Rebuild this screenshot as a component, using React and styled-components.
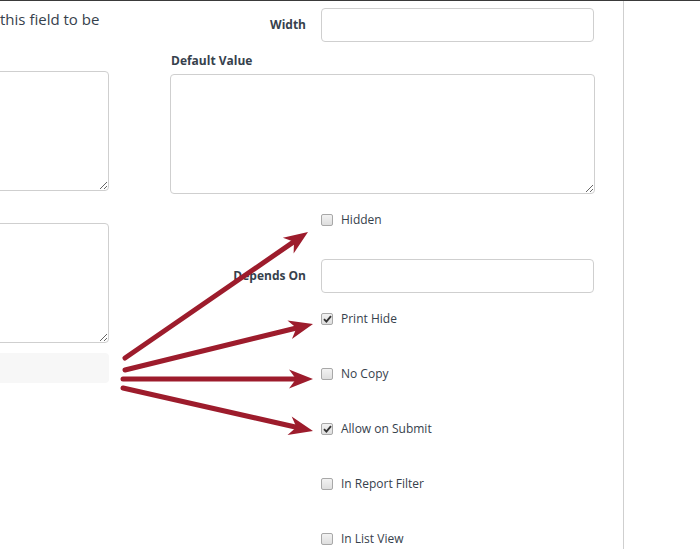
import React from "react";
import styled, { createGlobalStyle } from "styled-components";

const Global = createGlobalStyle`
  html, body { margin: 0; padding: 0; background: #fff; }
  body { font-family: "Open Sans", "Liberation Sans", sans-serif; color: #36414c; overflow: hidden; }
  * { box-sizing: border-box; }
`;

const Page = styled.div`
  position: relative;
  display: flex;
  width: 700px;
  height: 549px;
  border-top: 1px solid #3a3a3a;
  overflow: hidden;
`;

const Main = styled.div`
  width: 623px;
  display: flex;
  gap: 61px;
`;

const Sidebar = styled.div`
  flex: 1;
  border-left: 1px solid #cfcfcf;
`;

const LeftCol = styled.div`
  width: 109px;
  display: flex;
  flex-direction: column;
`;

const Description = styled.p`
  margin: 8px 0 0;
  font-size: 15px;
  line-height: 20px;
  color: #36414c;
  white-space: nowrap;
`;

const TextArea = styled.textarea`
  display: block;
  width: calc(100% + 60px);
  margin-left: -60px;
  height: ${(p) => p.$h || 120}px;
  margin-top: ${(p) => p.$mt || 0}px;
  border: 1px solid #cfcfcf;
  border-radius: 4px;
  background: #fff;
  resize: vertical;
  font-family: inherit;
  outline: none;
`;

const WideTextArea = styled(TextArea)`
  width: 100%;
  margin-left: 0;
`;

const StaticBox = styled.div`
  width: calc(100% + 60px);
  margin-left: -60px;
  margin-top: 10px;
  height: 30px;
  background: #f7f7f7;
  border-radius: 4px;
`;

const RightCol = styled.div`
  width: 425px;
  display: flex;
  flex-direction: column;
`;

const HRow = styled.div`
  display: flex;
  align-items: center;
  margin-top: ${(p) => p.$mt}px;
`;

const HLabel = styled.label`
  width: 151px;
  padding-right: 15px;
  text-align: right;
  font-size: 12px;
  font-weight: 700;
  line-height: 18px;
  color: #36414c;
`;

const Input = styled.input`
  width: 273px;
  height: ${(p) => p.$h || 34}px;
  border: 1px solid #cfcfcf;
  border-radius: 4px;
  background: #fff;
  outline: none;
`;

const StackLabel = styled.label`
  display: block;
  margin: 10px 0 4px 1px;
  font-size: 12px;
  font-weight: 700;
  line-height: 18px;
  color: #36414c;
`;

const CheckRow = styled.div`
  display: flex;
  align-items: center;
  height: 18px;
  margin-top: ${(p) => p.$mt}px;
  padding-left: 151px;
`;

const Box = styled.span`
  width: 12px;
  height: 12px;
  border: 1px solid #a8a8a8;
  border-radius: 2px;
  background: linear-gradient(#f2f2f2, #dedede);
  display: flex;
  align-items: center;
  justify-content: center;
`;

const CheckText = styled.span`
  margin-left: 8px;
  font-size: 12px;
  line-height: 18px;
  color: #36414c;
`;

const Overlay = styled.svg`
  position: absolute;
  left: 0;
  top: 0;
  pointer-events: none;
`;

function Check({ label, checked, mt }) {
  return (
    <CheckRow $mt={mt}>
      <Box>
        {checked && (
          <svg width="9" height="8" viewBox="0 0 9 8">
            <path d="M1 4.2 L3.4 6.6 L8 1.2" fill="none" stroke="#333" strokeWidth="1.9" />
          </svg>
        )}
      </Box>
      <CheckText>{label}</CheckText>
    </CheckRow>
  );
}

const ARROW = "#9d1c2c";
const arrows = [
  [125, 357, 308, 231],
  [125, 369, 313, 323],
  [123, 378, 313, 378],
  [123, 387, 313, 430],
];

function Arrow({ x1, y1, x2, y2 }) {
  const dx = x2 - x1;
  const dy = y2 - y1;
  const len = Math.hypot(dx, dy);
  const ux = dx / len;
  const uy = dy / len;
  const nx = -uy;
  const ny = ux;
  const L = 24;
  const W = 9.5;
  const N = 7;
  const bx = x2 - L * ux;
  const by = y2 - L * uy;
  const sx = x2 - (L - N) * ux;
  const sy = y2 - (L - N) * uy;
  const pts = [
    [x2, y2],
    [bx + W * nx, by + W * ny],
    [sx, sy],
    [bx - W * nx, by - W * ny],
  ]
    .map((p) => p.join(","))
    .join(" ");
  return (
    <g>
      <line x1={x1} y1={y1} x2={sx} y2={sy} stroke={ARROW} strokeWidth="5" strokeLinecap="round" />
      <polygon points={pts} fill={ARROW} />
    </g>
  );
}

export default function App() {
  return (
    <>
      <Global />
      <Page>
        <Main>
          <LeftCol>
            <Description>this field to be</Description>
            <TextArea $mt={42} />
            <TextArea $mt={32} />
            <StaticBox />
          </LeftCol>
          <RightCol>
            <HRow $mt={7}>
              <HLabel>Width</HLabel>
              <Input />
            </HRow>
            <StackLabel>Default Value</StackLabel>
            <WideTextArea $h={120} />
            <Check label="Hidden" mt={17} />
            <HRow $mt={30}>
              <HLabel>Depends On</HLabel>
              <Input $h={34} />
            </HRow>
            <Check label="Print Hide" checked mt={17} />
            <Check label="No Copy" mt={37} />
            <Check label="Allow on Submit" checked mt={37} />
            <Check label="In Report Filter" mt={37} />
            <Check label="In List View" mt={37} />
          </RightCol>
        </Main>
        <Sidebar />
        <Overlay width="700" height="549" viewBox="0 0 700 549">
          {arrows.map(([a, b, c, d], i) => (
            <Arrow key={i} x1={a} y1={b} x2={c} y2={d} />
          ))}
        </Overlay>
      </Page>
    </>
  );
}
